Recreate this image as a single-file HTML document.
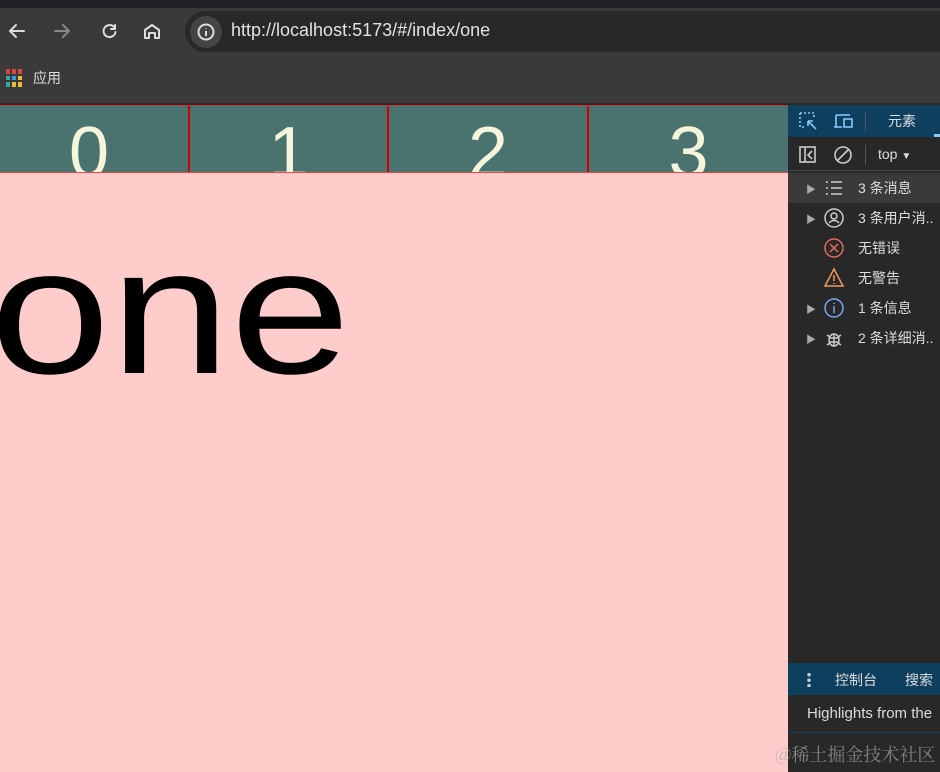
<!DOCTYPE html><html><head><meta charset="utf-8"><style>
*{margin:0;padding:0;box-sizing:border-box}
body{width:940px;height:772px;overflow:hidden;background:#ffcccc;font-family:"Liberation Sans","Noto Sans CJK SC",sans-serif;position:relative}
.a{position:absolute}
.row{position:absolute;left:0;width:152px;height:30px;display:flex;align-items:center;white-space:nowrap}
.row .t{position:absolute;left:18px;font-size:10px;color:#aaa}
.row svg{position:absolute;left:35px;top:4px}
.row .x{position:absolute;left:70px}
</style></head><body>
<div class="a" style="left:0;top:0;width:940px;height:8px;background:#202124"></div>
<div class="a" style="left:0;top:8px;width:940px;height:96px;background:#3a3a3a"></div>
<div class="a" style="left:0;top:103px;width:940px;height:2px;background:#2a2a2a"></div>
<svg class="a" style="left:0;top:18px" width="170" height="28" viewBox="0 0 170 28" fill="none" stroke-width="2" stroke-linecap="round" stroke-linejoin="round">
<path d="M24 13H10M16 7l-6 6 6 6" stroke="#ddd"/>
<path d="M55 13h14M63 7l6 6-6 6" stroke="#888"/>
<path d="M114 9a6 6 0 1 0 1.5 5M115 7v4h-4" stroke="#ddd"/>
<path d="M145 20v-8l7-5 7 5v8h-4v-5h-6v5z" stroke="#ddd"/>
</svg>
<div class="a" style="left:185px;top:11px;width:780px;height:41px;border-radius:21px;background:#282828"></div>
<div class="a" style="left:190px;top:16px;width:32px;height:32px;border-radius:16px;background:#444"></div>
<svg class="a" style="left:196px;top:22px" width="20" height="20"><circle cx="10" cy="10" r="7.5" fill="none" stroke="#ddd" stroke-width="2"/><path d="M10 9v5M10 6v.5" stroke="#ddd" stroke-width="2"/></svg>
<div class="a" style="left:231px;top:20px;color:#e2e2e2;font-size:18px">http://localhost:5173/#/index/one</div>
<div class="a" style="left:6px;top:69px;width:18px;height:18px;display:grid;grid-template-columns:repeat(3,4px);gap:2px">
<i style="background:#d44"></i><i style="background:#d44"></i><i style="background:#d44"></i><i style="background:#3a9"></i><i style="background:#39e"></i><i style="background:#eb3"></i><i style="background:#3a9"></i><i style="background:#eb3"></i><i style="background:#eb3"></i></div>
<div class="a" style="left:33px;top:68px;color:#ddd;font-size:14px">应用</div>
<div class="a" style="left:0;top:105px;width:788px;height:68px;background:#4a7370;border-top:1px solid #c33;border-bottom:1px solid #e44;overflow:hidden">
<div class="a" style="left:0;width:190px;height:68px;color:#f5f5dc;font-size:72px;text-align:center;line-height:94px;border-right:2px solid #c00;padding-right:10px">0</div>
<div class="a" style="left:190px;width:199px;height:68px;color:#f5f5dc;font-size:72px;text-align:center;line-height:94px;border-right:2px solid #c00">1</div>
<div class="a" style="left:389px;width:200px;height:68px;color:#f5f5dc;font-size:72px;text-align:center;line-height:94px;border-right:2px solid #c00">2</div>
<div class="a" style="left:589px;width:199px;height:68px;color:#f5f5dc;font-size:72px;text-align:center;line-height:94px">3</div>
</div>
<div class="a" style="left:-10px;top:222px;font-size:180px;line-height:180px;color:#000;transform:scaleX(1.2);transform-origin:0 0">one</div>
<div class="a" style="left:788px;top:105px;width:152px;height:667px;background:#282828;color:#ddd;font-size:14px">
<div class="a" style="left:0;top:0;width:152px;height:32px;background:#0f3f5f"></div>
<svg class="a" style="left:10px;top:6px" width="70" height="20" fill="none" stroke="#8cf" stroke-width="1.6"><path d="M2 2h14v5M2 2v14h5" stroke-dasharray="2 2"/><path d="M10 10l8 8M10 10h5M10 10v5"/><path d="M38 4h14M38 4v12M36 16h8M46 8h8v8h-8z"/></svg>
<div class="a" style="left:77px;top:8px;width:1px;height:18px;background:#557"></div>
<div class="a" style="left:100px;top:6px;color:#ddd">元素</div>
<div class="a" style="left:146px;top:29px;width:6px;height:3px;background:#8cf"></div>
<div class="a" style="left:0;top:33px;width:152px;height:33px;border-bottom:1px solid #444"></div>
<svg class="a" style="left:10px;top:40px" width="60" height="20" fill="none" stroke="#ccc" stroke-width="1.6"><rect x="2" y="2" width="15" height="15"/><path d="M7 2v15M14 6l-4 4 4 4"/><circle cx="45" cy="10" r="8"/><path d="M39 16l12-12"/></svg>
<div class="a" style="left:77px;top:40px;width:1px;height:20px;background:#555"></div>
<div class="a" style="left:90px;top:41px">top <span style="font-size:10px">▼</span></div>
<div class="row" style="top:68px;background:#3a3a3a"><span class="t">▶</span><svg width="22" height="22" fill="none" stroke="#ccc" stroke-width="1.6"><path d="M3 5h2M3 11h2M3 17h2M8 5h11M8 11h11M8 17h11"/></svg><span class="x">3 条消息</span></div>
<div class="row" style="top:98px"><span class="t">▶</span><svg width="22" height="22" fill="none" stroke="#ccc" stroke-width="1.5"><circle cx="11" cy="11" r="9"/><circle cx="11" cy="9" r="3"/><path d="M6 16q5-5 10 0"/></svg><span class="x">3 条用户消..</span></div>
<div class="row" style="top:128px"><svg width="22" height="22" fill="none" stroke="#e46c5c" stroke-width="1.5"><circle cx="11" cy="11" r="9"/><path d="M7 7l8 8M15 7l-8 8"/></svg><span class="x">无错误</span></div>
<div class="row" style="top:158px"><svg width="22" height="22" fill="none" stroke="#f29a5c" stroke-width="1.5"><path d="M11 2L20 19H2z M11 8v6M11 16v1"/></svg><span class="x">无警告</span></div>
<div class="row" style="top:188px"><span class="t">▶</span><svg width="22" height="22" fill="none" stroke="#7aa7f0" stroke-width="1.5"><circle cx="11" cy="11" r="9"/><path d="M11 9v7M11 6v1"/></svg><span class="x">1 条信息</span></div>
<div class="row" style="top:218px"><span class="t">▶</span><svg width="22" height="22" fill="none" stroke="#ccc" stroke-width="1.5"><ellipse cx="11" cy="13" rx="5" ry="6"/><path d="M6 11h10M6 15h10M11 8v11M4 8l3 2M18 8l-3 2M4 18l3-2M18 18l-3-2"/></svg><span class="x">2 条详细消..</span></div>
<div class="a" style="left:0;top:558px;width:152px;height:32px;background:#0f3f5f"></div>
<div class="a" style="left:19px;top:567px;width:4px;height:15px;background:radial-gradient(circle,#ccc 1.6px,transparent 2px) 0 0/4px 5.5px"></div>
<div class="a" style="left:47px;top:565px">控制台</div>
<div class="a" style="left:117px;top:565px">搜索</div>
<div class="a" style="left:19px;top:600px;font-size:15px;white-space:nowrap">Highlights from the</div>
<div class="a" style="left:0;top:627px;width:152px;height:1px;background:#0f3f5f"></div>
</div>
<div class="a" style="left:775px;top:741px;font-size:18px;color:rgba(170,170,170,.7);white-space:nowrap;font-family:'Noto Serif CJK SC',serif">@稀土掘金技术社区</div>
</body></html>
